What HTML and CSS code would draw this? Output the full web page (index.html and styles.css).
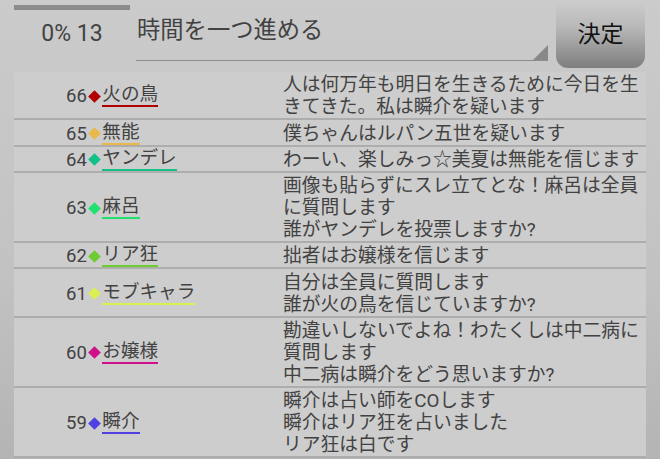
FILE: index.html
```html
<!DOCTYPE html>
<html lang="ja">
<head>
<meta charset="utf-8">
<link rel="stylesheet" href="styles.css">
</head>
<body>
<div class="header">
  <div class="status">
    <div class="progress"></div>
    <div class="count">0% 13</div>
  </div>
  <div class="select">
    <div class="select-text">時間を一つ進める</div>
    <div class="select-corner"></div>
  </div>
  <div class="button">決定</div>
</div>
<div class="table">
  <div class="row">
    <div class="who"><span class="num">66</span><span class="dia c66"></span><span class="name u66">火の鳥</span></div>
    <div class="msg">人は何万年も明日を生きるために今日を生きてきた。私は瞬介を疑います</div>
  </div>
  <div class="row">
    <div class="who"><span class="num">65</span><span class="dia c65"></span><span class="name u65">無能</span></div>
    <div class="msg">僕ちゃんはルパン五世を疑います</div>
  </div>
  <div class="row">
    <div class="who"><span class="num">64</span><span class="dia c64"></span><span class="name u64">ヤンデレ</span></div>
    <div class="msg">わーい、楽しみっ☆美夏は無能を信じます</div>
  </div>
  <div class="row">
    <div class="who"><span class="num">63</span><span class="dia c63"></span><span class="name u63">麻呂</span></div>
    <div class="msg">画像も貼らずにスレ立てとな！麻呂は全員に質問します<br>誰がヤンデレを投票しますか?</div>
  </div>
  <div class="row">
    <div class="who"><span class="num">62</span><span class="dia c62"></span><span class="name u62">リア狂</span></div>
    <div class="msg">拙者はお嬢様を信じます</div>
  </div>
  <div class="row">
    <div class="who"><span class="num">61</span><span class="dia c61"></span><span class="name u61">モブキャラ</span></div>
    <div class="msg">自分は全員に質問します<br>誰が火の鳥を信じていますか?</div>
  </div>
  <div class="row">
    <div class="who"><span class="num">60</span><span class="dia c60"></span><span class="name u60">お嬢様</span></div>
    <div class="msg">勘違いしないでよね！わたくしは中二病に質問します<br>中二病は瞬介をどう思いますか?</div>
  </div>
  <div class="row">
    <div class="who"><span class="num">59</span><span class="dia c59"></span><span class="name u59">瞬介</span></div>
    <div class="msg">瞬介は占い師をCOします<br>瞬介はリア狂を占いました<br>リア狂は白です</div>
  </div>
</div>
</body>
</html>
```

FILE: styles.css
```css
html, body {
  margin: 0;
  padding: 0;
}
body {
  width: 660px;
  height: 459px;
  overflow: hidden;
  background: linear-gradient(to bottom, #cbcbcb 0%, #c2c2c2 60%, #b4b4b4 100%);
  font-family: Roboto, "Noto Sans CJK JP", sans-serif;
  color: #424242;
}
.header {
  display: flex;
  height: 72px;
  padding-left: 14px;
}
.status {
  width: 116px;
  display: flex;
  flex-direction: column;
}
.progress {
  height: 5px;
  margin-top: 5px;
  background: #8c8c8c;
}
.count {
  margin-top: 10px;
  text-align: center;
  font-size: 23px;
  line-height: 28px;
  color: #424242;
}
.select {
  position: relative;
  margin-left: 6px;
  width: 412px;
  height: 61px;
  border-bottom: 1px solid #8e8e8e;
  box-sizing: border-box;
}
.select-text {
  padding-left: 1px;
  padding-top: 15px;
  font-size: 23.3px;
  line-height: 31px;
  color: #424242;
}
.select-corner {
  position: absolute;
  right: 0;
  bottom: 0;
  width: 0;
  height: 0;
  border-left: 15px solid transparent;
  border-bottom: 15px solid #888;
}
.button {
  margin-left: 8px;
  width: 89px;
  height: 68px;
  border-radius: 12px;
  background: linear-gradient(to bottom, #cdcdcd 0%, #b8b8b8 40%, #7e7e7e 100%);
  display: flex;
  align-items: center;
  justify-content: center;
  font-size: 23px;
  color: #111;
  padding-bottom: 4px;
  box-sizing: border-box;
}
.table {
  margin: 0 14px;
  background: #cdcdcd;
}
.row {
  display: grid;
  grid-template-columns: 269px 1fr;
  padding-top: 2.25px;
  border-bottom: 2px solid #adadad;
}
.who {
  display: flex;
  align-items: center;
  padding-left: 52px;
  font-size: 18.5px;
  line-height: 18px;
}
.dia {
  display: inline-block;
  width: 9px;
  height: 9px;
  transform: rotate(45deg);
  margin: 0 3px 0 3.5px;
}
.name {
  font-size: 18.6px;
  line-height: 18px;
  padding-bottom: 2px;
  border-bottom: 2px solid;
}
.msg {
  font-size: 18.75px;
  line-height: 22px;
  color: #424242;
}
.c66 { background: #b00000; }
.u66 { border-color: #b00000; }
.c65 { background: #e8b84a; }
.u65 { border-color: #e8b84a; }
.c64 { background: #14c08a; }
.u64 { border-color: #14c08a; }
.c63 { background: #20e070; }
.u63 { border-color: #20e070; }
.c62 { background: #6ccc30; }
.u62 { border-color: #6ccc30; }
.c61 { background: #daf050; }
.u61 { border-color: #daf050; }
.c60 { background: #d0108a; }
.u60 { border-color: #d0108a; }
.c59 { background: #5040e0; }
.u59 { border-color: #5040e0; }
```
